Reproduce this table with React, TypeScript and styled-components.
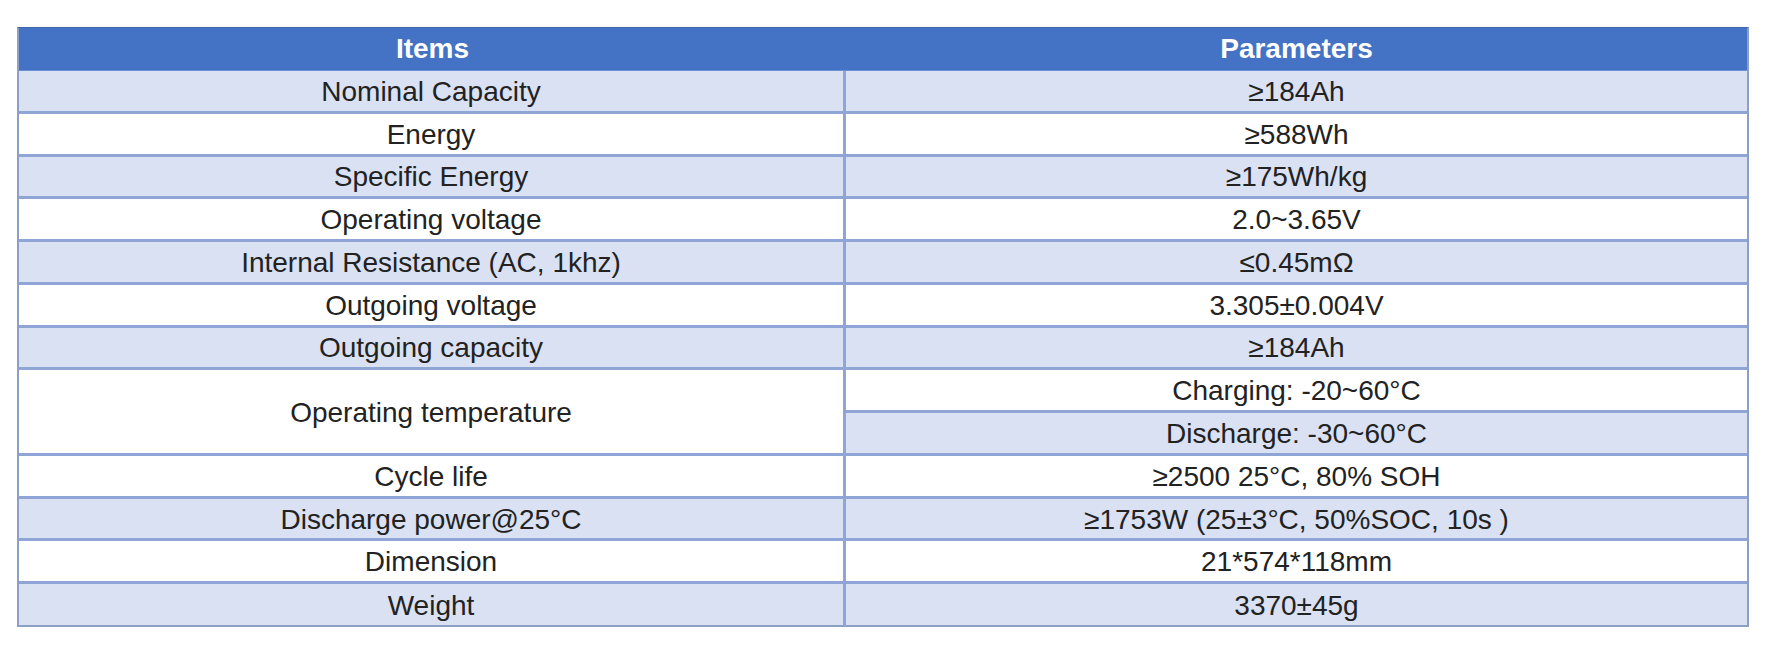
import React from 'react';
import styled, { createGlobalStyle } from 'styled-components';

const GlobalStyle = createGlobalStyle`
  body {
    margin: 0;
    background: #ffffff;
    font-family: "Liberation Sans", Arial, sans-serif;
  }
`;

const Page = styled.div`
  padding: 27px 19px 32px 17px;
`;

const Sheet = styled.div`
  display: grid;
  grid-template-columns: 827px 1fr;
  grid-template-rows: 43px;
  grid-auto-rows: 42.77px;
  width: 1732px;
  box-sizing: border-box;
  border-left: 2px solid #8c9fc4;
  border-right: 2px solid #8c9fc4;
  border-top: 1px solid #3f66ad;
  font-size: 28px;
  color: #222222;
`;

const HeadCell = styled.div`
  display: flex;
  align-items: center;
  justify-content: center;
  background: #4472c4;
  color: #ffffff;
  font-weight: bold;
  border-bottom: 1px solid #6b8fd0;
`;

const Cell = styled.div<{ $shade: boolean; $left?: boolean; $span?: number; $last?: boolean }>`
  display: flex;
  align-items: center;
  justify-content: center;
  box-sizing: border-box;
  background: ${(p) => (p.$shade ? '#d9e1f3' : '#ffffff')};
  border-bottom: ${(p) => (p.$last ? '2px solid #8c9fc4' : '3px solid #8ea5d6')};
  border-right: ${(p) => (p.$left ? '3px solid #8ea5d6' : 'none')};
  grid-row: ${(p) => (p.$span ? `span ${p.$span}` : 'auto')};
  padding-top: 2px;
`;

type Row = { item: string; values: string[] };

const rows: Row[] = [
  { item: 'Nominal Capacity', values: ['≥184Ah'] },
  { item: 'Energy', values: ['≥588Wh'] },
  { item: 'Specific Energy', values: ['≥175Wh/kg'] },
  { item: 'Operating voltage', values: ['2.0~3.65V'] },
  { item: 'Internal Resistance (AC, 1khz)', values: ['≤0.45mΩ'] },
  { item: 'Outgoing voltage', values: ['3.305±0.004V'] },
  { item: 'Outgoing capacity', values: ['≥184Ah'] },
  { item: 'Operating temperature', values: ['Charging: -20~60°C', 'Discharge: -30~60°C'] },
  { item: 'Cycle life', values: ['≥2500 25°C, 80% SOH'] },
  { item: 'Discharge power@25°C', values: ['≥1753W (25±3°C, 50%SOC, 10s )'] },
  { item: 'Dimension', values: ['21*574*118mm'] },
  { item: 'Weight', values: ['3370±45g'] },
];

const App: React.FC = () => {
  let line = 0;
  const total = rows.reduce((n, r) => n + r.values.length, 0);

  return (
    <Page>
      <GlobalStyle />
      <Sheet>
        <HeadCell>Items</HeadCell>
        <HeadCell>Parameters</HeadCell>
        {rows.map((row) => {
          const first = line;
          const cells = row.values.map((v, i) => {
            const idx = line++;
            return (
              <Cell key={v} $shade={idx % 2 === 0} $last={idx === total - 1} style={{ gridColumn: 2 }}>
                {v}
              </Cell>
            );
          });
          const spans = row.values.length;
          return (
            <React.Fragment key={row.item}>
              <Cell
                $left
                $shade={spans === 1 && first % 2 === 0}
                $span={spans > 1 ? spans : undefined}
                $last={first + spans === total}
                style={{ gridColumn: 1 }}
              >
                {row.item}
              </Cell>
              {cells}
            </React.Fragment>
          );
        })}
      </Sheet>
    </Page>
  );
};

export default App;
